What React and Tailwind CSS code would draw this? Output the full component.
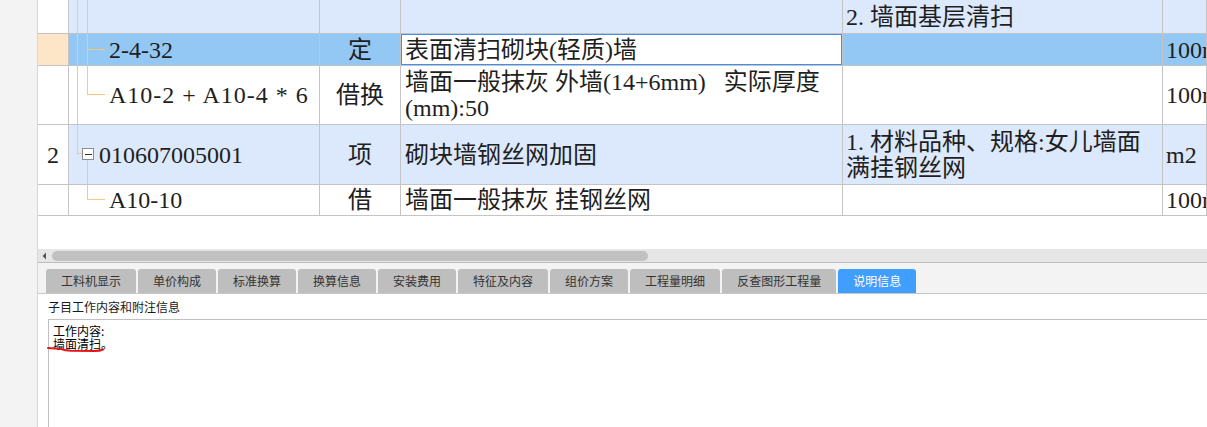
import React from 'react';

const line = '#fbc67f';
const gridFont = "font-['Liberation_Serif','Noto_Sans_CJK_SC',serif]";
const uiFont = "font-['Noto_Sans_CJK_SC','Noto_Sans',sans-serif]";

// 树形连接线，坐标相对于编码单元格
function Tree({ kind, h }) {
  const v = (x, y1, y2) => <line x1={x + 0.5} y1={y1} x2={x + 0.5} y2={y2} stroke={line} />;
  const hz = (y, x1, x2) => <line x1={x1} y1={y + 0.5} x2={x2} y2={y + 0.5} stroke={line} />;
  return (
    <svg className="absolute left-0 top-0" width="40" height={h} shapeRendering="crispEdges">
      {kind === 'top' && (<>{v(8, 0, h)}{v(18, 0, h)}</>)}
      {kind === 'child' && (<>{v(8, 0, h)}{v(18, 0, h)}{hz(15, 18, 36)}</>)}
      {kind === 'last' && (<>{v(8, 0, h)}{v(18, 0, 28)}{hz(28, 18, 36)}</>)}
      {kind === 'parent' && (
        <>
          {v(8, 0, 28)}
          {hz(28, 8, 13)}
          {v(18, 34, h)}
          <rect x="13.5" y="23.5" width="11" height="11" fill="#fff" stroke="#8c8c8c" />
          <line x1="16" y1="29.5" x2="22.5" y2="29.5" stroke="#333" />
        </>
      )}
      {kind === 'leaf' && (<>{v(18, 0, 14)}{hz(14, 18, 36)}</>)}
    </svg>
  );
}

const rows = [
  { h: 'h-[34px]', ph: 33, bg: 'bg-[#dce8fc]', tree: 'top', feat: ['2. 墙面基层清扫'] },
  { h: 'h-[32px]', ph: 31, bg: 'bg-[#93c8f5]', sel: true, tree: 'child', code: '2-4-32', type: '定', name: ['表面清扫砌块(轻质)墙'], unit: '100m' },
  { h: 'h-[59px]', ph: 58, bg: 'bg-white', tree: 'last', code: 'A10-2 + A10-4 * 6', codeCls: 'tracking-[1px]', type: '借换', name: ['墙面一般抹灰 外墙(14+6mm)   实际厚度', '(mm):50'], unit: '100m' },
  { h: 'h-[60px]', ph: 59, bg: 'bg-[#dce8fc]', num: '2', tree: 'parent', code: '010607005001', codePad: 'pl-[30px]', type: '项', name: ['砌块墙钢丝网加固'], feat: ['1. 材料品种、规格:女儿墙面', '满挂钢丝网'], unit: 'm2' },
  { h: 'h-[31px]', ph: 30, bg: 'bg-white', tree: 'leaf', code: 'A10-10', type: '借', name: ['墙面一般抹灰 挂钢丝网'], unit: '100m' },
];

const tabs = ['工料机显示', '单价构成', '标准换算', '换算信息', '安装费用', '特征及内容', '组价方案', '工程量明细', '反查图形工程量', '说明信息'];

const cell = 'border-r border-b border-[#c4c4c4] flex items-center overflow-hidden';

function Lines({ items }) {
  if (!items) return null;
  return (
    <div>
      {items.map((t, i) => (
        <div key={i} className="whitespace-pre">{t}</div>
      ))}
    </div>
  );
}

export default function App() {
  return (
    <div className="flex h-[427px] w-full overflow-hidden bg-white">
      <div className="w-[38px] shrink-0 border-r border-[#d6d6d6] bg-[#f3f3f3]" />

      <div className="flex min-w-0 flex-1 flex-col">
        {/* 清单表格 */}
        <div className={`${gridFont} text-[24px] leading-[26px] text-[#1f1f1f]`}>
          {rows.map((r, i) => (
            <div key={i} className={`flex ${r.h}`}>
              <div className={`${cell} w-[31px] shrink-0 justify-center ${r.sel ? 'bg-[#fde6c8]' : 'bg-white'}`}>{r.num}</div>
              <div className={`${cell} relative w-[251px] shrink-0 ${r.bg} ${r.codePad || 'pl-[40px]'} whitespace-pre`}>
                <Tree kind={r.tree} h={r.ph} />
                {r.sel && <div className="absolute -left-[2px] top-0 bottom-0 w-[2px] bg-[#3f8ff0]" />}
                <span className={`relative ${r.codeCls || ''}`}>{r.code}</span>
              </div>
              <div className={`${cell} w-[81px] shrink-0 justify-center ${r.bg}`}>{r.type}</div>
              <div className={`${cell} relative w-[442px] shrink-0 pl-[4px] ${r.sel ? 'bg-white' : r.bg}`}>
                {r.sel && <div className="absolute -left-px -top-px -right-px -bottom-px border-2 border-[#3f8ff0]" />}
                <Lines items={r.name} />
              </div>
              <div className={`${cell} w-[320px] shrink-0 pl-[3px] ${r.bg}`}>
                <Lines items={r.feat} />
              </div>
              <div className={`${cell} min-w-0 flex-1 pl-[3px] whitespace-nowrap ${r.bg}`}>{r.unit}</div>
            </div>
          ))}
        </div>

        <div className="h-[33px] shrink-0" />

        {/* 横向滚动条 */}
        <div className="flex h-[14px] shrink-0 items-center border-b border-[#bdbdbd] bg-[#e6e6e6]">
          <svg width="14" height="14" viewBox="0 0 14 14" className="shrink-0">
            <path d="M8 3.5 L4.5 7 L8 10.5 Z" fill="#555" />
          </svg>
          <div className="h-[10px] w-[596px] rounded-full bg-[#c1c1c1]" />
        </div>

        {/* 页签 */}
        <div className={`${uiFont} flex h-[31px] shrink-0 items-end gap-[2px] border-b border-[#c8c8c8] bg-[#f3f3f3] pl-[8px] text-[12px]`}>
          {tabs.map((t, i) => (
            <div
              key={t}
              className={`flex h-[24px] items-center rounded-t-[3px] px-[15px] leading-none ${
                i === tabs.length - 1 ? 'bg-[#409eff] text-white' : 'bg-[#bebebe] text-[#333]'
              }`}
            >
              {t}
            </div>
          ))}
        </div>

        <div className={`${uiFont} flex h-[25px] shrink-0 items-center pl-[10px] text-[12px] text-[#1a1a1a]`}>
          子目工作内容和附注信息
        </div>

        <div className={`${uiFont} relative ml-[10px] flex-1 border-l border-t border-[#c0c0c0] pl-[4px] pt-[4px] text-[12px] leading-[13px] text-black`}>
          <div>工作内容:</div>
          <div>墙面清扫。</div>
          <svg className="absolute left-[-4px] top-[24px]" width="62" height="10" viewBox="0 0 62 10">
            <path d="M3 4 Q 10 4.3 16 5 Q 20 6.6 26 6.8 L 50 7 Q 55 7 58 5.5" fill="none" stroke="#e8141b" strokeWidth="2" strokeLinecap="round" />
          </svg>
        </div>
      </div>
    </div>
  );
}
